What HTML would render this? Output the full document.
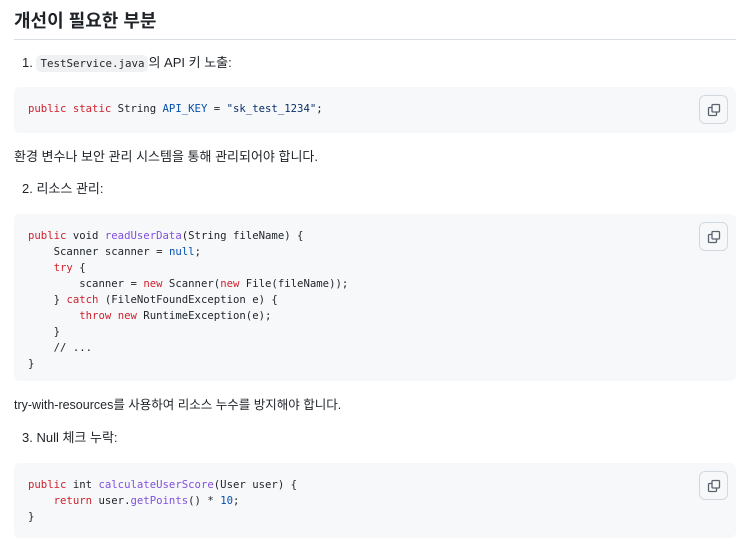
<!DOCTYPE html>
<html><head><meta charset="utf-8"><style>
body{margin:0;width:744px;height:547px;background:#fff;font-family:"Liberation Sans","Noto Sans CJK KR",sans-serif;color:#1f2328;position:relative;overflow:hidden}
.a{position:absolute;white-space:pre}
h2{position:absolute;left:14px;top:8px;margin:0;font-size:18px;font-weight:bold;line-height:26px}
.hr{position:absolute;left:14px;top:39px;width:722px;height:1px;background:#d8dee4}
.t{font-size:13px;line-height:20px}
.cb{position:absolute;left:14px;width:722px;background:#f6f8fa;border-radius:6px}
pre{position:absolute;left:14px;margin:0;font-family:"DejaVu Sans Mono","Liberation Mono",monospace;font-size:10.65px;line-height:16px;color:#1f2328}
.k{color:#cf222e}.f{color:#8250df}.c{color:#0550ae}.s{color:#0a3069}.cm{color:#59636e}
.btn{position:absolute;right:8px;top:8px;width:29px;height:29px;border:1px solid #d1d9e0;border-radius:6px;background:#f6f8fa;box-sizing:border-box}
.btn svg{position:absolute;left:6px;top:6px}
code{font-family:"DejaVu Sans Mono",monospace;font-size:10.8px;background:#eff1f3;border-radius:5px;padding:2px 4px}
</style></head><body>
<h2>개선이 필요한 부분</h2>
<div class="hr"></div>
<div class="a t" style="left:22px;top:53px">1. <code>TestService.java</code>의 API 키 노출:</div>
<div class="cb" style="top:87px;height:46px"><pre style="top:14px"><span class="k">public</span> <span class="k">static</span> String <span class="c">API_KEY</span> = <span class="s">"sk_test_1234"</span>;</pre><div class="btn"><svg width="16" height="16" viewBox="0 0 16 16" fill="none" stroke="#59636e" stroke-width="1.3"><rect x="6" y="2.5" width="7.5" height="7.5" rx="1"/><path d="M5.5 5.5h-2a1 1 0 0 0-1 1v6a1 1 0 0 0 1 1h6a1 1 0 0 0 1-1v-2"/></svg></div></div>
<div class="a t" style="left:14px;top:147px">환경 변수나 보안 관리 시스템을 통해 관리되어야 합니다.</div>
<div class="a t" style="left:22px;top:179px">2. 리소스 관리:</div>
<div class="cb" style="top:214px;height:167px"><pre style="top:14px"><span class="k">public</span> void <span class="f">readUserData</span>(String fileName) {
    Scanner scanner = <span class="c">null</span>;
    <span class="k">try</span> {
        scanner = <span class="k">new</span> Scanner(<span class="k">new</span> File(fileName));
    } <span class="k">catch</span> (FileNotFoundException e) {
        <span class="k">throw</span> <span class="k">new</span> RuntimeException(e);
    }
    // ...
}</pre><div class="btn"><svg width="16" height="16" viewBox="0 0 16 16" fill="none" stroke="#59636e" stroke-width="1.3"><rect x="6" y="2.5" width="7.5" height="7.5" rx="1"/><path d="M5.5 5.5h-2a1 1 0 0 0-1 1v6a1 1 0 0 0 1 1h6a1 1 0 0 0 1-1v-2"/></svg></div></div>
<div class="a t" style="left:14px;top:395px;font-size:12.5px">try-with-resources를 사용하여 리소스 누수를 방지해야 합니다.</div>
<div class="a t" style="left:22px;top:428px">3. Null 체크 누락:</div>
<div class="cb" style="top:463px;height:75px"><pre style="top:14px"><span class="k">public</span> int <span class="f">calculateUserScore</span>(User user) {
    <span class="k">return</span> user.<span class="f">getPoints</span>() * <span class="c">10</span>;
}</pre><div class="btn"><svg width="16" height="16" viewBox="0 0 16 16" fill="none" stroke="#59636e" stroke-width="1.3"><rect x="6" y="2.5" width="7.5" height="7.5" rx="1"/><path d="M5.5 5.5h-2a1 1 0 0 0-1 1v6a1 1 0 0 0 1 1h6a1 1 0 0 0 1-1v-2"/></svg></div></div>
</body></html>
